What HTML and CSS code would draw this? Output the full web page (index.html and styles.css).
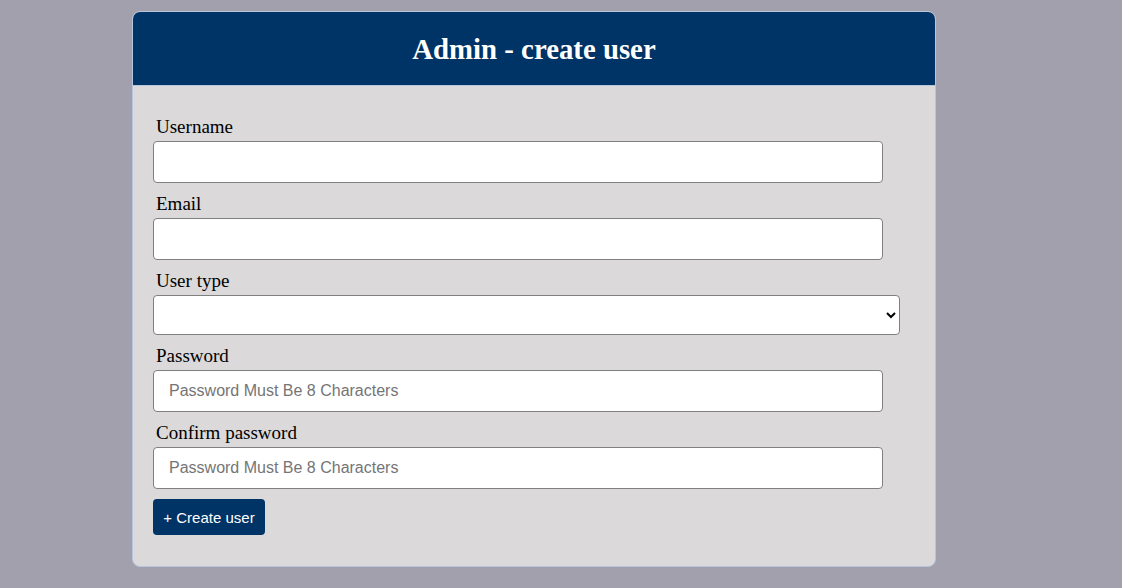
FILE: index.html
```html
<!DOCTYPE html>
<html lang="en">
<head>
<meta charset="utf-8">
<title>Admin - create user</title>
<link rel="stylesheet" href="styles.css">
</head>
<body>
<div class="card">
  <div class="card-header">
    <h1 class="title">Admin - create user</h1>
  </div>
  <form class="card-body">
    <label class="field-label" for="username">Username</label>
    <input class="field-input" id="username" type="text">
    <label class="field-label" for="email">Email</label>
    <input class="field-input" id="email" type="email">
    <label class="field-label" for="usertype">User type</label>
    <select class="field-select" id="usertype"><option></option></select>
    <label class="field-label" for="password">Password</label>
    <input class="field-input" id="password" type="password" placeholder="Password Must Be 8 Characters">
    <label class="field-label" for="confirm">Confirm password</label>
    <input class="field-input" id="confirm" type="password" placeholder="Password Must Be 8 Characters">
    <button class="submit-btn" type="button">+ Create user</button>
  </form>
</div>
</body>
</html>
```
FILE: styles.css
```css
html, body {
  margin: 0;
  padding: 0;
}
body {
  background: #a1a0ac;
  font-family: "Liberation Serif", "Times New Roman", serif;
  padding-top: 11px;
  height: 588px;
  box-sizing: border-box;
}
.card {
  width: 804px;
  margin-left: 132px;
  box-sizing: border-box;
  border: 1px solid #b7c6de;
  border-radius: 8px;
  background: #dbd9da;
  overflow: hidden;
}
.card-header {
  background: #003366;
  height: 73px;
  display: flex;
  align-items: center;
  justify-content: center;
  border-bottom: 1px solid #b7c6de;
}
.title {
  margin: 0;
  color: #ffffff;
  font-size: 28.8px;
  font-weight: bold;
  line-height: 33px;
  padding-top: 2px;
}
.card-body {
  display: flex;
  flex-direction: column;
  align-items: flex-start;
  padding: 20px 20px 31px 20px;
}
.field-label {
  display: block;
  font-size: 19px;
  line-height: 22px;
  color: #000;
  margin: 10px 0 3px 3px;
}
.field-input {
  width: 730px;
  height: 42px;
  box-sizing: border-box;
  border: 1px solid #808080;
  border-radius: 4px;
  background: #fff;
  padding: 0 15px;
  font-family: "Liberation Sans", Arial, sans-serif;
  font-size: 16px;
  margin: 0;
}
.field-input::placeholder {
  color: #757575;
}
.field-select {
  width: 747px;
  height: 40px;
  box-sizing: border-box;
  border: 1px solid #808080;
  border-radius: 4px;
  background: #fff;
  font-family: "Liberation Sans", Arial, sans-serif;
  font-size: 16px;
  margin: 0;
}
.submit-btn {
  margin-top: 10px;
  width: 112px;
  height: 36px;
  background: #003366;
  color: #fff;
  border: none;
  border-radius: 4px;
  font-family: "Liberation Sans", Arial, sans-serif;
  font-size: 15px;
  padding: 0;
  cursor: pointer;
}
```
